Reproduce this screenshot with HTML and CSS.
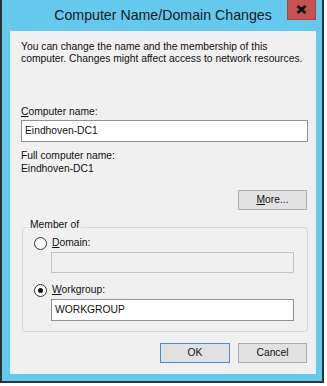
FILE: index.html
```html
<!DOCTYPE html>
<html lang="en">
<head>
  <meta charset="UTF-8">
  <title>Computer Name/Domain Changes</title>
  <link rel="stylesheet" href="styles.css">
</head>
<body>

  <div class="window">
    <div class="titlebar">
      <div class="title">Computer Name/Domain Changes</div>
      <div class="close">
        <svg width="11" height="9" viewBox="0 0 11 9">
          <path d="M1.5 1 L9.5 8 M9.5 1 L1.5 8" stroke="#111" stroke-width="2.8"/>
        </svg>
      </div>
    </div>

    <div class="client">
      <p class="desc">You can change the name and the membership of this computer. Changes might affect access to network resources.</p>

      <div class="label name-label"><u>C</u>omputer name:</div>
      <div class="field">Eindhoven-DC1</div>

      <div class="label full-label">Full computer name:</div>
      <div class="label full-value">Eindhoven-DC1</div>

      <div class="button-row more-row">
        <div class="button"><u>M</u>ore...</div>
      </div>

      <div class="group">
        <div class="group-label">Member of</div>

        <div class="radio-row domain-row">
          <span class="radio"></span>
          <span class="label"><u>D</u>omain:</span>
        </div>
        <div class="field disabled"></div>

        <div class="radio-row workgroup-row">
          <span class="radio checked"></span>
          <span class="label"><u>W</u>orkgroup:</span>
        </div>
        <div class="field">WORKGROUP</div>
      </div>

      <div class="button-row footer">
        <div class="button default">OK</div>
        <div class="button">Cancel</div>
      </div>
    </div>
  </div>

</body>
</html>
```

FILE: styles.css
```css
:root {
  --frame: #65c9ee;
  --frame-edge: #2e3336;
  --face: #f0f0f0;
  --text: #111;
  --field-border: #8e9296;
  --button-bg: #e1e1e1;
  --button-border: #acacac;
}

* {
  box-sizing: border-box;
  margin: 0;
  padding: 0;
}

body {
  background: #fff;
  font-family: "Liberation Sans", Arial, sans-serif;
  font-size: 10.3px;
  color: var(--text);
}

/* okno z ramką */
.window {
  width: 324px;
  background: var(--frame);
  border: 2px solid var(--frame-edge);
  border-top: 0;
  padding: 0 6px 7px 8px;
}

.titlebar {
  display: flex;
  align-items: flex-start;
  height: 31px;
}

.title {
  flex: 1;
  padding-left: 29px;
  padding-top: 6px;
  text-align: center;
  font-size: 14.2px;
  line-height: 18px;
  color: #1a1a1a;
}

.close {
  width: 29px;
  height: 20px;
  background: #c75050;
  border: 1px solid #a84444;
  border-top: 0;
  display: flex;
  align-items: center;
  justify-content: center;
}

.client {
  background: var(--face);
  border: 1px solid #e4f3fa;
  padding: 9px 7px 10px 10px;
  display: flex;
  flex-direction: column;
}

.desc {
  line-height: 12px;
}

.label {
  line-height: 12px;
}

.name-label { margin-top: 41px; }
.full-label { margin-top: 8px; }
.full-value { margin-top: 1px; }

.field {
  height: 22px;
  margin-top: 2px;
  background: #fff;
  border: 1px solid var(--field-border);
  padding: 0 3px;
  line-height: 20px;
}

.field.disabled {
  background: var(--face);
  border-color: #c3c3c3;
  height: 21px;
}

.button-row {
  display: flex;
  justify-content: flex-end;
  gap: 8px;
  margin-right: 1px;
}

.more-row { margin-top: 15px; }

.button {
  width: 69px;
  height: 20px;
  background: var(--button-bg);
  border: 1px solid var(--button-border);
  text-align: center;
  line-height: 18px;
}

.button.default {
  width: 70px;
  border-color: #4a8fd0;
}

/* ramka grupy "Member of" */
.group {
  margin-top: 17px;
  margin-left: 1px;
  border: 1px solid #d8d8d8;
  border-radius: 3px;
  padding: 0 13px 10px 28px;
  display: flex;
  flex-direction: column;
}

.group-label {
  align-self: flex-start;
  margin-top: -9px;
  margin-left: -23px;
  padding: 0 2px;
  background: var(--face);
  line-height: 12px;
}

.radio-row {
  display: flex;
  align-items: center;
  gap: 5px;
  margin-left: -17px;
  height: 12px;
}

.domain-row { margin-top: 6px; }
.workgroup-row { margin-top: 11px; }

.group .field { margin-top: 3px; }

.radio {
  width: 13px;
  height: 13px;
  border: 1px solid #333;
  border-radius: 50%;
  background: #fff;
  display: flex;
  align-items: center;
  justify-content: center;
}

.radio.checked::after {
  content: "";
  width: 5px;
  height: 5px;
  border-radius: 50%;
  background: #111;
}

.footer { margin-top: 11px; }
```
